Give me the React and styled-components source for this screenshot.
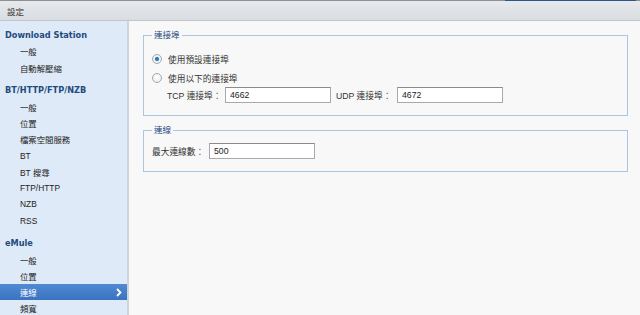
import React from "react"
import styled, { createGlobalStyle } from "styled-components"

const GlobalStyle = createGlobalStyle`
    html, body {
        margin: 0;
        padding: 0;
        height: 100%;
    }
    body {
        font-family: "Liberation Sans", "Noto Sans CJK TC", sans-serif;
        background: #f8f8f8;
        color: #333;
    }
    #root {
        height: 100%;
    }
`

const Window = styled.div`
    height: 100%;
    display: flex;
    flex-direction: column;
    overflow: hidden;
`

const TopEdge = styled.div`
    height: 1px;
    background: linear-gradient(to right, #8b9096 0, #8b9096 505px, #2d5586 505px, #2d5586 636px, #8b9096 636px);
`

const TitleBar = styled.div`
    height: 19px;
    display: flex;
    align-items: center;
    padding-left: 7px;
    font-size: 8.5px;
    color: #333;
    background: linear-gradient(to bottom, #e7e9ec 0%, #d9dde1 100%);
    border-bottom: 1px solid #c2c6cb;
`

const Body = styled.div`
    flex: 1;
    display: flex;
    min-height: 0;
`

const Sidebar = styled.nav`
    width: 127px;
    flex-shrink: 0;
    background: #deeaf7;
    border-right: 2px solid #cdd3da;
    padding-top: 6px;
    box-sizing: content-box;
`

const Group = styled.div`
    & + & {
        margin-top: 6.3px;
    }
`

const GroupTitle = styled.div`
    height: 16.3px;
    line-height: 16.3px;
    padding-left: 5px;
    font-family: "DejaVu Sans", "Noto Sans CJK TC", sans-serif;
    font-weight: bold;
    font-size: 8.2px;
    color: #1f4b7e;
    white-space: nowrap;
`

const NavItem = styled.div`
    height: 16.3px;
    display: flex;
    align-items: center;
    justify-content: space-between;
    padding: 0 5px 0 20px;
    font-size: 8.4px;
    color: ${props => props.active ? "#fff" : "#222"};
    background: ${props => props.active ? "linear-gradient(to bottom, #4f8ad3 0%, #3a72bf 100%)" : "transparent"};
    white-space: nowrap;
`

const Chevron = styled.svg`
    width: 6px;
    height: 9px;
`

const Content = styled.main`
    flex: 1;
    padding: 8px 12px 0 14px;
    display: flex;
    flex-direction: column;
    gap: 8px;
`

const Fieldset = styled.fieldset`
    margin: 0;
    padding: 0 8px 12px 8px;
    border: 1px solid #a9c7e4;
    min-width: 0;
`

const Legend = styled.legend`
    padding: 0 2px;
    height: 12px;
    line-height: 12px;
    font-size: 8.5px;
    color: #1f4b7e;
`

const RadioRow = styled.label`
    height: ${props => props.h}px;
    display: flex;
    align-items: center;
    gap: 6px;
    font-size: 8.7px;
    color: #333;
`

const Radio = styled.span`
    width: 8px;
    height: 8px;
    border-radius: 50%;
    border: 1px solid #a4a8ad;
    background: ${props => props.checked
        ? "radial-gradient(circle, #2e6fb5 0, #3b7cc2 1.6px, #e9ecef 2.4px, #fafafa 100%)"
        : "radial-gradient(circle at 50% 35%, #ffffff 0, #e6e8eb 100%)"};
    flex-shrink: 0;
`

const FieldRow = styled.div`
    display: flex;
    align-items: center;
    height: 16px;
    padding-left: ${props => props.indent || 0}px;
    margin-top: ${props => props.top || 0}px;
`

const FieldLabel = styled.span`
    width: ${props => props.w}px;
    flex-shrink: 0;
    font-size: 8.7px;
    color: #333;
    white-space: nowrap;
`

const Input = styled.input`
    width: 106px;
    height: 16px;
    box-sizing: border-box;
    margin: 0 ${props => props.gap || 0}px 0 0;
    padding: 0 4px;
    border: 1px solid #a9a9a9;
    border-top-color: #8c8c8c;
    background: #fff;
    font-family: "Liberation Sans", sans-serif;
    font-size: 8.7px;
    color: #222;
    outline: none;
`

const groups = [
    { title: "Download Station", items: ["一般", "自動解壓縮"] },
    { title: "BT/HTTP/FTP/NZB", items: ["一般", "位置", "檔案空間服務", "BT", "BT 搜尋", "FTP/HTTP", "NZB", "RSS"] },
    { title: "eMule", items: ["一般", "位置", "連線", "頻寬"], active: 2 },
]

const App = () => (
    <Window>
        <GlobalStyle />
        <TopEdge />
        <TitleBar>設定</TitleBar>
        <Body>
            <Sidebar>
                {groups.map((group, g) => (
                    <Group key={g}>
                        <GroupTitle>{group.title}</GroupTitle>
                        {group.items.map((item, i) => (
                            <NavItem key={i} active={group.active === i}>
                                {item}
                                {group.active === i && (
                                    <Chevron viewBox="0 0 6 9">
                                        <path d="M1 1 L4.5 4.5 L1 8" stroke="#fff" strokeWidth="1.8" fill="none" />
                                    </Chevron>
                                )}
                            </NavItem>
                        ))}
                    </Group>
                ))}
            </Sidebar>
            <Content>
                <Fieldset>
                    <Legend>連接埠</Legend>
                    <RadioRow h={20} style={{ marginTop: 8 }}>
                        <Radio checked />
                        使用預設連接埠
                    </RadioRow>
                    <RadioRow h={18}>
                        <Radio />
                        使用以下的連接埠
                    </RadioRow>
                    <FieldRow indent={15}>
                        <FieldLabel w={58}>TCP 連接埠：</FieldLabel>
                        <Input defaultValue="4662" gap={5} />
                        <FieldLabel w={61}>UDP 連接埠：</FieldLabel>
                        <Input defaultValue="4672" />
                    </FieldRow>
                </Fieldset>
                <Fieldset>
                    <Legend>連線</Legend>
                    <FieldRow top={7}>
                        <FieldLabel w={57}>最大連線數：</FieldLabel>
                        <Input defaultValue="500" />
                    </FieldRow>
                </Fieldset>
            </Content>
        </Body>
    </Window>
)

export default App
